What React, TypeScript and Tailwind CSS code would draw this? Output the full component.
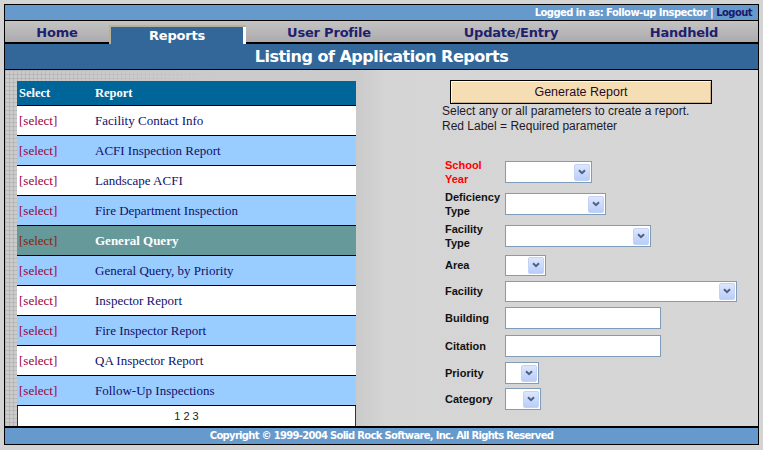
import React from 'react';

const reports = [
  'Facility Contact Info',
  'ACFI Inspection Report',
  'Landscape ACFI',
  'Fire Department Inspection',
  'General Query',
  'General Query, by Priority',
  'Inspector Report',
  'Fire Inspector Report',
  'QA Inspector Report',
  'Follow-Up Inspections',
];

const tahoma = "font-['DejaVu_Sans',Verdana,sans-serif] font-bold";

function Dropdown({ className }: { className: string }) {
  return (
    <div className={`flex items-center justify-end border border-[#7f9db9] bg-white pr-[1px] ${className}`}>
      <div className="flex h-[17px] w-[16px] items-center justify-center rounded-[2px] border border-[#c3d3f5] bg-[linear-gradient(to_bottom,#dde7fd,#b9cdf9)]">
        <svg width="8" height="6" viewBox="0 0 8 6">
          <path d="M1 1.2 L4 4.2 L7 1.2" fill="none" stroke="#4d6185" strokeWidth="2" />
        </svg>
      </div>
    </div>
  );
}

function TextBox({ className }: { className: string }) {
  return <div className={`border border-[#7f9db9] bg-white ${className}`} />;
}

function FieldRow({ label, h, children, red }: { label: React.ReactNode; h: string; children: React.ReactNode; red?: boolean }) {
  return (
    <div className={`flex items-center ${h}`}>
      <div
        className={`w-[60px] font-['Liberation_Sans',Arial,sans-serif] text-[11px] font-bold leading-[14px] ${red ? 'text-[#ff0000]' : 'text-[#111]'}`}
      >
        {label}
      </div>
      {children}
    </div>
  );
}

export default function App() {
  return (
    <div className="h-[450px] w-[763px] bg-[#d4d4d4] p-[4px]">
      <div className="flex h-[441px] flex-col border border-black">
        {/* Login bar */}
        <div className={`flex h-[16px] items-center justify-end border-b border-black bg-[#6699cc] pr-[6px] text-[10px] leading-none tracking-[-0.55px] text-white ${tahoma}`}>
          <span>Logged in as: Follow-up Inspector | </span>
          <span className="ml-[3px] text-[#1a1a6b]">Logout</span>
        </div>

        {/* Tabs */}
        <div className={`flex h-[23px] items-end bg-[linear-gradient(to_bottom,#c4c4c4,#b5b3b5_60%,#a9a7a9)] text-[13px] tracking-[-0.2px] text-[#1f1f6e] ${tahoma}`}>
          <div className="flex h-full w-[104px] items-center justify-center border-b-2 border-black pt-[2px]">Home</div>
          <div className="flex h-[19px] w-[137px] border-l-2 border-t-2 border-[#b9b196]">
            <div className="flex flex-1 items-center justify-center bg-[#336699] text-white">Reports</div>
            <div className="w-[3px] bg-white" />
          </div>
          <div className="flex h-full w-[166px] items-center justify-center border-b-2 border-black pt-[2px]">User Profile</div>
          <div className="flex h-full w-[198px] items-center justify-center border-b-2 border-black pt-[2px]">Update/Entry</div>
          <div className="flex h-full flex-1 items-center justify-center border-b-2 border-black pt-[2px]">Handheld</div>
        </div>

        {/* Title */}
        <div className={`flex h-[26px] items-center justify-center border-b border-black bg-[#336699] text-[16px] tracking-[-0.5px] text-white ${tahoma}`}>
          Listing of Application Reports
        </div>

        {/* Content */}
        <div className="flex h-[358px] border-b-2 border-black">
          {/* Left */}
          <div className="flex w-[351px] flex-col bg-[#cbcbcb] bg-[linear-gradient(90deg,rgba(203,203,203,0)_12px,#cbcbcb_220px),linear-gradient(#b6b6b6_1px,transparent_1px),linear-gradient(90deg,#b6b6b6_1px,transparent_1px)] bg-[size:100%_100%,4px_4px,4px_4px] pl-[12px] pt-[11px]">
            <div className="flex flex-1 flex-col font-['Liberation_Serif','Times_New_Roman',serif]">
              <div className="flex h-[25px] items-center border-b border-black bg-[#006699] text-[12.5px] font-bold text-white">
                <div className="w-[78px] pl-[2px]">Select</div>
                <div>Report</div>
              </div>
              {reports.map((r, i) => {
                const active = r === 'General Query';
                const bg = active ? 'bg-[#669999]' : i % 2 === 0 ? 'bg-white' : 'bg-[#99ccff]';
                return (
                  <div key={r} className={`flex h-[30px] items-center border-b border-black text-[13px] ${bg}`}>
                    <div className={`w-[78px] pl-[2px] ${active ? 'text-[#8b1c0c]' : 'text-[#99003a]'}`}>[select]</div>
                    <div className={active ? 'font-bold text-white' : 'text-[#10106a]'}>{r}</div>
                  </div>
                );
              })}
              <div className="flex flex-1 items-center justify-center border-l border-r border-[#333] bg-white font-['Liberation_Sans',Arial,sans-serif] text-[11px] text-[#222]">
                1 2 3
              </div>
            </div>
          </div>

          {/* Right */}
          <div className="flex flex-1 flex-col bg-[linear-gradient(90deg,#cacaca,#d5d5d5_30px,#d6d6d6)] pt-[10px] font-['Liberation_Sans',Arial,sans-serif]">
            <div className="ml-[94px] flex h-[24px] w-[262px] items-center justify-center border border-black bg-[#f5deb3] text-[12.5px] text-[#2a0a2a] shadow-[inset_1px_1px_0_#fffaf0,inset_-1px_-1px_0_#c8b08a]">
              Generate Report
            </div>
            <div className="ml-[86px] text-[12px] leading-[15px] text-[#221a2a]">
              <div>Select any or all parameters to create a report.</div>
              <div>Red Label = Required parameter</div>
            </div>

            <div className="ml-[89px] mt-[22px] flex flex-col">
              <FieldRow h="h-[32px]" red label={<>School<br />Year</>}>
                <Dropdown className="h-[22px] w-[87px]" />
              </FieldRow>
              <FieldRow h="h-[32px]" label={<>Deficiency<br />Type</>}>
                <Dropdown className="h-[22px] w-[101px]" />
              </FieldRow>
              <FieldRow h="h-[32px]" label={<>Facility<br />Type</>}>
                <Dropdown className="h-[22px] w-[146px]" />
              </FieldRow>
              <FieldRow h="h-[26px]" label="Area">
                <Dropdown className="h-[21px] w-[41px]" />
              </FieldRow>
              <FieldRow h="h-[26px]" label="Facility">
                <Dropdown className="h-[21px] w-[232px]" />
              </FieldRow>
              <FieldRow h="h-[28px]" label="Building">
                <TextBox className="h-[22px] w-[156px]" />
              </FieldRow>
              <FieldRow h="h-[28px]" label="Citation">
                <TextBox className="h-[22px] w-[156px]" />
              </FieldRow>
              <FieldRow h="h-[26px]" label="Priority">
                <Dropdown className="h-[22px] w-[34px]" />
              </FieldRow>
              <FieldRow h="h-[26px]" label="Category">
                <Dropdown className="h-[22px] w-[36px]" />
              </FieldRow>
            </div>
          </div>
        </div>

        {/* Footer */}
        <div className={`flex flex-1 items-center justify-center bg-[#6699cc] text-[10px] leading-none tracking-[-0.7px] text-white ${tahoma}`}>
          Copyright © 1999-2004 Solid Rock Software, Inc. All Rights Reserved
        </div>
      </div>
    </div>
  );
}
